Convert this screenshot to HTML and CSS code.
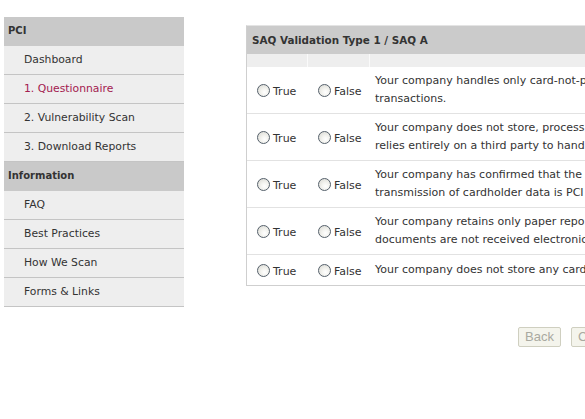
FILE: index.html
```html
<!DOCTYPE html>
<html>
<head>
<meta charset="utf-8">
<link rel="stylesheet" href="styles.css">
</head>
<body>
<div class="page">
  <nav class="sidebar">
    <div class="nav-head">PCI</div>
    <a class="nav-item">Dashboard</a>
    <a class="nav-item active">1. Questionnaire</a>
    <a class="nav-item">2. Vulnerability Scan</a>
    <a class="nav-item">3. Download Reports</a>
    <div class="nav-head">Information</div>
    <a class="nav-item">FAQ</a>
    <a class="nav-item">Best Practices</a>
    <a class="nav-item">How We Scan</a>
    <a class="nav-item">Forms &amp; Links</a>
  </nav>
  <main class="main">
    <section class="panel">
      <div class="panel-head">SAQ Validation Type 1 / SAQ A</div>
      <div class="row stripe">
        <div class="c1"></div><div class="c2"></div><div class="c3"></div>
      </div>
      <div class="row q">
        <label class="c1"><span class="radio"></span>True</label>
        <label class="c2"><span class="radio"></span>False</label>
        <div class="c3">Your company handles only card-not-present (e-commerce or mail/telephone-order)<br>transactions.</div>
      </div>
      <div class="row q">
        <label class="c1"><span class="radio"></span>True</label>
        <label class="c2"><span class="radio"></span>False</label>
        <div class="c3">Your company does not store, process, or transmit any cardholder data on your premises, but<br>relies entirely on a third party to handle all these functions.</div>
      </div>
      <div class="row q">
        <label class="c1"><span class="radio"></span>True</label>
        <label class="c2"><span class="radio"></span>False</label>
        <div class="c3">Your company has confirmed that the third party handling storage, processing, and/or<br>transmission of cardholder data is PCI DSS compliant.</div>
      </div>
      <div class="row q">
        <label class="c1"><span class="radio"></span>True</label>
        <label class="c2"><span class="radio"></span>False</label>
        <div class="c3">Your company retains only paper reports or receipts with cardholder data, and these<br>documents are not received electronically.</div>
      </div>
      <div class="row q single">
        <label class="c1"><span class="radio"></span>True</label>
        <label class="c2"><span class="radio"></span>False</label>
        <div class="c3">Your company does not store any cardholder data in electronic format.</div>
      </div>
    </section>
    <div class="buttons">
      <button class="btn" disabled>Back</button>
      <button class="btn" disabled>Continue</button>
    </div>
  </main>
</div>
</body>
</html>
```

FILE: styles.css
```css
html, body {
  margin: 0;
  padding: 0;
  background: #fff;
  overflow: hidden;
}
body {
  font-family: "DejaVu Sans", Verdana, sans-serif;
  font-size: 11px;
  color: #333;
}
.page {
  display: flex;
  align-items: flex-start;
  width: 1000px;
}
.sidebar {
  width: 180px;
  margin: 17px 0 0 4px;
  display: flex;
  flex-direction: column;
}
.nav-head {
  height: 29px;
  line-height: 28px;
  padding-left: 4px;
  background: #c9c9c9;
  font-weight: bold;
  font-size: 10px;
  color: #333;
}
.nav-item {
  height: 28px;
  line-height: 28px;
  padding-left: 20px;
  background: #eeeeee;
  border-bottom: 1px solid #c4c4c4;
  font-size: 10.8px;
  color: #333;
}
.nav-item.active {
  color: #a3204f;
}
.main {
  margin: 25px 0 0 62px;
  display: flex;
  flex-direction: column;
}
.panel {
  width: 640px;
  border-left: 1px solid #cfcfcf;
  border-bottom: 1px solid #cfcfcf;
  border-top: 1px solid #e4e4e4;
}
.panel-head {
  height: 28px;
  line-height: 28px;
  background: #cbcbcb;
  padding-left: 5px;
  font-weight: bold;
  font-size: 10.4px;
  color: #333;
}
.row {
  display: flex;
}
.c1 { width: 60px; flex: none; }
.c2 { width: 61px; flex: none; }
.c3 { flex: 1; }
.stripe {
  height: 13px;
  background: #eeeeee;
}
.stripe .c1, .stripe .c2 {
  border-right: 1px solid #fafafa;
}
.q {
  height: 46px;
  border-bottom: 1px solid #e2e2e2;
  align-items: center;
}
.q.single {
  height: 30px;
  border-bottom: none;
}
.q label {
  display: flex;
  align-items: center;
  box-sizing: border-box;
  padding-top: 2px;
  color: #333;
}
.q .c1 { width: 61px; padding-left: 10px; }
.q .c2 { width: 62px; padding-left: 10px; }
.radio {
  width: 11px;
  height: 11px;
  border: 1px solid #55606b;
  border-radius: 50%;
  background: radial-gradient(circle at 60% 65%, #ffffff 0%, #f4f4f0 35%, #d6d6d0 100%);
  margin-right: 3px;
  flex: none;
  position: relative;
  top: -1px;
}
.q .c3 {
  line-height: 18px;
  padding-left: 5px;
  white-space: nowrap;
  color: #333;
}
.buttons {
  display: flex;
  gap: 10px;
  margin: 41px 0 0 272px;
}
.btn {
  height: 20px;
  padding: 0 6px;
  border: 1px solid #cfcfc0;
  border-radius: 2px;
  background: #f4f4ec;
  color: #a9a9a0;
  font-family: "Liberation Sans", Arial, sans-serif;
  font-size: 13px;
  line-height: 18px;
}
```
